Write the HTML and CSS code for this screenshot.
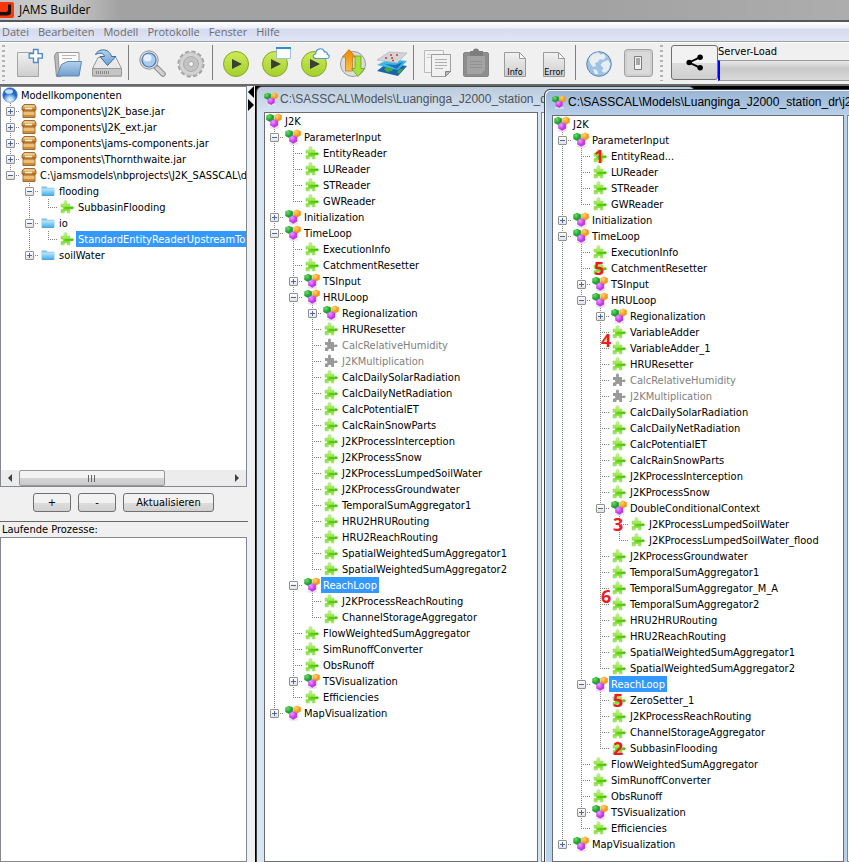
FILE: index.html
```
<!DOCTYPE html>
<html lang="de">
<head>
    <meta charset="UTF-8">
    <meta name="viewport" content="width=device-width, initial-scale=1.0">
    <title>JAMS Builder</title>
    <link rel="stylesheet" href="styles.css">
</head>
<body>

    <!-- Shared icons -->
    <svg class="defs" aria-hidden="true">
        <defs>
            <linearGradient id="gPuzzle" x1="0" y1="0" x2="0" y2="1">
                <stop offset="0" stop-color="#d3f5a6"/>
                <stop offset="0.45" stop-color="#9be84e"/>
                <stop offset="0.6" stop-color="#5fd417"/>
                <stop offset="1" stop-color="#b4f06c"/>
            </linearGradient>
            <radialGradient id="gGreen" cx="0.35" cy="0.3"><stop offset="0" stop-color="#6fdc60"/><stop offset="1" stop-color="#18a032"/></radialGradient>
            <radialGradient id="gOrange" cx="0.35" cy="0.3"><stop offset="0" stop-color="#ffd27a"/><stop offset="1" stop-color="#f09a1a"/></radialGradient>
            <radialGradient id="gPurple" cx="0.35" cy="0.3"><stop offset="0" stop-color="#ee9bff"/><stop offset="1" stop-color="#c436ea"/></radialGradient>
            <linearGradient id="gFolder" x1="0" y1="0" x2="0" y2="1"><stop offset="0" stop-color="#bfe9fb"/><stop offset="1" stop-color="#3fa6e6"/></linearGradient>
            <radialGradient id="gBall" cx="0.5" cy="0.85"><stop offset="0" stop-color="#ffffff"/><stop offset="0.45" stop-color="#a8d4f8"/><stop offset="1" stop-color="#1f66cc"/></radialGradient>
            <linearGradient id="gPaper" x1="0" y1="0" x2="0" y2="1"><stop offset="0" stop-color="#f2f2f2"/><stop offset="1" stop-color="#cdcdcd"/></linearGradient>
            <linearGradient id="gLime" x1="0" y1="0" x2="0" y2="1"><stop offset="0" stop-color="#cdea5a"/><stop offset="1" stop-color="#a3d02c"/></linearGradient>
            <linearGradient id="gBlue" x1="0" y1="0" x2="0" y2="1"><stop offset="0" stop-color="#b4d2ec"/><stop offset="1" stop-color="#6f9fce"/></linearGradient>
            <linearGradient id="gArrow" x1="0" y1="0" x2="0" y2="1"><stop offset="0" stop-color="#e88a00"/><stop offset="1" stop-color="#fbc04a"/></linearGradient>
        </defs>
        <symbol id="puzzle" viewBox="0 0 16 16">
            <path fill="url(#gPuzzle)" stroke="#8fd552" stroke-width=".5" d="M2 5h3.200C4.600 3 5.200 1.500 6.500 1.500S8.400 3 7.800 5H11v3c1.500-.9 3.600-.6 3.600.8S12.500 10.400 11 9.700V14H8.200c.5-1.600-.2-2.300-1.400-2.300S5 12.400 5.400 14H2v-3.600c1.600.5 2.300 0 2.300-1S3.500 7.800 2 8.300z"/>
            <path fill="#4cc40c" d="M6 8.200h5c1.500-.7 3.400-.5 3.400.6s-1.900 1.300-3.400.7H7z"/>
        </symbol>
        <symbol id="puzzle-off" viewBox="0 0 16 16">
            <path fill="#999" d="M2 5h3.200C4.600 3 5.200 1.500 6.500 1.500S8.400 3 7.800 5H11v3c1.500-.9 3.600-.6 3.600.8S12.500 10.400 11 9.700V14H8.200c.5-1.600-.2-2.300-1.400-2.300S5 12.400 5.400 14H2v-3.600c1.600.5 2.300 0 2.300-1S3.500 7.800 2 8.300z"/>
        </symbol>
        <symbol id="context" viewBox="0 0 16 16">
            <ellipse cx="8.500" cy="14.800" rx="5" ry="1" fill="#e4e4e4"/>
            <path fill="url(#gGreen)" d="M4 .8l3.900 1.600v4.400L4.200 8.900.3 6.900V2.500z"/>
            <path fill="url(#gOrange)" d="M11.900.6l3.900 1.600v4.200l-3.700 2.100-3.700-1.900V2.300z"/>
            <path fill="url(#gPurple)" d="M8.100 6.300l4.100 1.600v4.500l-3.900 2.400-4.100-2.200V8.200z"/>
        </symbol>
        <symbol id="jar" viewBox="0 0 16 16">
            <path fill="#d79a4a" stroke="#8a5418" stroke-width=".8" d="M3 1.500h10.500l1.500 2.500v3H1V4z"/>
            <path fill="#f4d7a4" d="M3.500 2.200h9.500l1 1.600H2.500z"/>
            <path fill="#d08c3c" stroke="#8a5418" stroke-width=".8" d="M2 7h12v7.500H2z"/>
            <path fill="#eabd78" d="M2.500 9h11v3h-11z"/>
            <path fill="#fff3da" d="M4 4.700h7v1.600H4z"/>
        </symbol>
        <symbol id="folder" viewBox="0 0 16 16">
            <path fill="#7cc3ea" d="M1.500 3.500h5l1 1.200H14v2H1.500z"/>
            <path fill="url(#gFolder)" d="M1.200 5.500h13.600L14.200 13H1.800z"/>
        </symbol>
        <symbol id="ball" viewBox="0 0 16 16">
            <circle cx="8" cy="8" r="7.300" fill="url(#gBall)" stroke="#4a86cf" stroke-width=".6"/>
            <ellipse cx="7" cy="4.500" rx="4" ry="2.300" fill="#fff" opacity=".75"/>
        </symbol>
        <symbol id="play" viewBox="0 0 32 32">
            <circle cx="16" cy="17" r="12.500" fill="url(#gLime)" stroke="#86a824"/>
            <path fill="#3c3f36" d="M12 12l10 5-10 5z"/>
        </symbol>
        <symbol id="paper" viewBox="0 0 32 32">
            <path fill="url(#gPaper)" stroke="#9a9a9a" d="M5.500 5.500h15l6 6v18h-21z"/>
            <path fill="#fafafa" stroke="#9a9a9a" d="M20.500 5.500v6h6z"/>
        </symbol>
    </svg>

    <header class="titlebar">
        <svg class="logo" viewBox="0 0 14 16" aria-hidden="true"><rect x="-3" width="17" height="16" rx="2" fill="#f8380a"/><path d="M8 2.500h3V10q0 3.500-4 3.500H0V10h6q2 0 2-2z" fill="#16100e"/></svg>
        <h1>JAMS Builder</h1>
    </header>

    <nav class="menubar">
        <button type="button">Datei</button>
        <button type="button">Bearbeiten</button>
        <button type="button">Modell</button>
        <button type="button">Protokolle</button>
        <button type="button">Fenster</button>
        <button type="button">Hilfe</button>
    </nav>

    <div class="toolbar">
        <span class="grip"></span>
        <button type="button" class="tool" aria-label="Neu">
            <svg viewBox="0 0 32 32"><path fill="url(#gPaper)" stroke="#a5a5a5" d="M4.500 5.500h21v24h-21z"/><path fill="#fff" stroke="#4a86c8" stroke-width="1.300" d="M20.500 2.500h4.500v4.200h4.300v4.500H25v4.300h-4.500v-4.300h-4.300V6.700h4.300z"/></svg>
        </button>
        <button type="button" class="tool" aria-label="Öffnen">
            <svg viewBox="0 0 32 32"><path fill="#bbb" stroke="#8c8c8c" d="M2.500 8.500l2-3h4v24h-4z"/><path fill="#fafafa" stroke="#999" d="M6 5.500h21v16H7z"/><path stroke="#b5b5b5" d="M10 8.500h14M10 11.500h10"/><path fill="url(#gBlue)" stroke="#5c88b4" d="M9.500 17.500l6-3h14l-2.500 14.500H5z"/></svg>
        </button>
        <button type="button" class="tool" aria-label="Speichern">
            <svg viewBox="0 0 32 32"><path fill="#e9e9e9" stroke="#999" d="M7 10.500h18l5.500 11v7.500h-29v-7.500z"/><path fill="#c4c4c4" stroke="#999" d="M1.500 21.500h29v7.500h-29z"/><path stroke="#8c8c8c" stroke-width="3" stroke-dasharray="1 1" d="M5 25.500h13"/><path fill="url(#gBlue)" stroke="#3b6ea8" d="M4.500 7.500C7 1.500 18 .5 20.500 9.500h4.300l-8.300 9-7.500-9h4.500c-1-4-5-4-9-2z"/></svg>
        </button>
        <span class="sep"></span>
        <button type="button" class="tool" aria-label="Suchen">
            <svg viewBox="0 0 32 32"><path stroke="#8c8c8c" stroke-width="5.500" stroke-linecap="round" d="M20 20l7 7"/><path stroke="#d0d0d0" stroke-width="3.500" stroke-linecap="round" d="M21 21l6 6"/><circle cx="13" cy="13" r="9.200" fill="#dcdcdc" stroke="#959595"/><circle cx="13" cy="13" r="7" fill="#a9cbee" stroke="#3f78bd" stroke-width="1.200"/><ellipse cx="11.500" cy="11" rx="4" ry="3.500" fill="#e6f1fb"/></svg>
        </button>
        <button type="button" class="tool" aria-label="Einstellungen">
            <svg viewBox="0 0 32 32"><circle cx="16" cy="17" r="11.500" fill="none" stroke="#a4a4a4" stroke-width="4" stroke-dasharray="4 2.020"/><circle cx="16" cy="17" r="11.500" fill="#d2d2d2" stroke="#bcbcbc"/><circle cx="16" cy="17" r="7.500" fill="#c2c2c2" stroke="#adadad"/><circle cx="16" cy="17" r="2.500" fill="#f4f4f4" stroke="#a8a8a8"/></svg>
        </button>
        <span class="sep"></span>
        <button type="button" class="tool" aria-label="Modell starten">
            <svg viewBox="0 0 32 32"><use href="#play"/></svg>
        </button>
        <button type="button" class="tool" aria-label="Im Launcher starten">
            <svg viewBox="0 0 32 32"><use href="#play"/><path fill="#fff" stroke="#9cc0da" d="M17.500 1.500h14v10h-14z"/><path fill="#2f8fc4" d="M17 0h15v2H17z"/></svg>
        </button>
        <button type="button" class="tool" aria-label="In der Cloud starten">
            <svg viewBox="0 0 32 32"><use href="#play"/><path fill="#fff" stroke="#4c9bce" stroke-width="1.200" d="M18 11.500c-3.500 0-3.500-4.500-.3-4.500 0-6 7.600-7 8.700-2 2.600-.6 3.200 1.300 2.800 2.300 3 .4 2.500 4.200-.2 4.200z"/></svg>
        </button>
        <button type="button" class="tool" aria-label="Daten übertragen">
            <svg viewBox="0 0 32 32"><circle cx="16" cy="17" r="12.500" fill="#ddd" stroke="#9a9a9a"/><path fill="url(#gArrow)" stroke="#c06c00" stroke-width=".7" d="M12 2.500l6.500 7.500h-3v14h-7V10h-3z"/><path fill="#a6e23a" stroke="#5d9a12" stroke-width=".7" d="M21 29.500l6.500-8h-3.500V9h-6v12.500h-3.500z"/></svg>
        </button>
        <button type="button" class="tool" aria-label="Karten">
            <svg viewBox="0 0 32 32"><path fill="#1766ad" d="M1 24l10-8 20 3-9 10z"/><path fill="#45a83c" d="M8 22l5-4 6 1-3 5-5 1zM21 25l3-3 3 0-4 5z"/><path fill="#3db7e6" d="M1 18l12-6 18 2-9 9z"/><path fill="#1a6fb8" d="M9 17l10 1 8-3-6 7z"/><path fill="#d2d5d8" stroke="#a9adb0" stroke-width=".6" d="M1 13l12-8 18 1-10 10z"/><path stroke="#e03030" stroke-width="1.500" stroke-dasharray="2 4" d="M9 11h11M14 8h11M16 13.500h6"/></svg>
        </button>
        <span class="sep"></span>
        <button type="button" class="tool" aria-label="Kopieren">
            <svg viewBox="0 0 32 32"><path fill="#f3f3f3" stroke="#bbb" d="M3.500 3.500h19v22h-19z"/><path stroke="#ccc" d="M6 7.500h14M6 10.500h14"/><path fill="#f1f1f1" stroke="#9f9f9f" d="M10.500 7.500h19v17l-5 5h-14z"/><path stroke="#b0b0b0" d="M14 12.500h12M14 15.500h12M14 18.500h12M14 21.500h8"/><path fill="#bbb" stroke="#888" d="M24.500 29.500v-5h5z"/></svg>
        </button>
        <button type="button" class="tool" aria-label="Einfügen">
            <svg viewBox="0 0 32 32"><rect x="3.500" y="5.500" width="25" height="24" rx="1.500" fill="#8e8e8e" stroke="#858585"/><path fill="#a3a3a3" d="M7 9h18v14l-4 4H7z"/><path fill="#7d7d7d" d="M10 4h3q0-2.500 3-2.500T19 4h4v5H10z"/><path stroke="#919191" d="M10 14.500h12M10 17.500h12M10 20.500h12"/></svg>
        </button>
        <button type="button" class="tool" aria-label="Info">
            <svg viewBox="0 0 32 32"><use href="#paper"/><text class="tool-text" x="16" y="28">Info</text></svg>
        </button>
        <button type="button" class="tool" aria-label="Error">
            <svg viewBox="0 0 32 32"><use href="#paper"/><text class="tool-text" x="16" y="28">Error</text></svg>
        </button>
        <span class="sep"></span>
        <button type="button" class="tool" aria-label="Online">
            <svg viewBox="0 0 32 32"><circle cx="16" cy="17" r="12.300" fill="#9cc3e6" stroke="#5a86b4"/><path fill="#e9edf0" d="M6 12c2-5 7-7 10-6.500l1 2 4-.5 2 3-3 3-3-1-2 3-3 1 1 3-3 1-3-4zM20 15l5-2 2.500 4-2 6-4 3-3-2 2-3-3-3zM10 22l4 1 1 4-3 0z"/></svg>
        </button>
        <button type="button" class="tool" aria-label="Schalter">
            <svg viewBox="0 0 32 32"><rect x="2.500" y="2.500" width="28" height="27" rx="3" fill="#cfcfcf" stroke="#a0a0a0"/><rect x="5" y="5" width="23" height="22" rx="2" fill="#dadada"/><path fill="#f2f2f2" stroke="#7c7c7c" d="M12.500 9.500h7v13h-7z"/><path fill="#a8a8a8" d="M14 11h4v7h-4z"/></svg>
        </button>
        <span class="grip"></span>
        <button type="button" class="share" aria-label="Teilen">
            <svg viewBox="0 0 16 16"><path stroke="#000" stroke-width="1.800" fill="none" d="M13.500 3L3 8l10.500 5"/><circle cx="3" cy="8" r="2.600"/><circle cx="13.300" cy="3" r="2.600"/><circle cx="13.300" cy="13" r="2.600"/></svg>
        </button>
        <div class="load">
            <span id="loadLabel">Server-Load</span>
            <div class="load-bar" role="meter" aria-labelledby="loadLabel" aria-valuenow="1" aria-valuemin="0" aria-valuemax="100"></div>
        </div>
    </div>

    <main class="workspace">
        <aside class="sidebar">
            <section class="components">
                <div class="pane component-pane">
                    <div class="tree-view">
                        <div class="row root"><svg><use href="#ball"/></svg><span>Modellkomponenten</span></div>
                        <ul class="tree">
                            <li><div class="row"><button type="button" class="knob plus" aria-label="Aufklappen"></button><svg><use href="#jar"/></svg><span>components\J2K_base.jar</span></div></li>
                            <li><div class="row"><button type="button" class="knob plus" aria-label="Aufklappen"></button><svg><use href="#jar"/></svg><span>components\J2K_ext.jar</span></div></li>
                            <li><div class="row"><button type="button" class="knob plus" aria-label="Aufklappen"></button><svg><use href="#jar"/></svg><span>components\jams-components.jar</span></div></li>
                            <li><div class="row"><button type="button" class="knob plus" aria-label="Aufklappen"></button><svg><use href="#jar"/></svg><span>components\Thornthwaite.jar</span></div></li>
                            <li><div class="row"><button type="button" class="knob" aria-label="Zuklappen"></button><svg><use href="#jar"/></svg><span>C:\jamsmodels\nbprojects\J2K_SASSCAL\d</span></div>
                                <ul class="tree">
                                    <li><div class="row"><button type="button" class="knob" aria-label="Zuklappen"></button><svg><use href="#folder"/></svg><span>flooding</span></div>
                                        <ul class="tree">
                                            <li><div class="row"><svg><use href="#puzzle"/></svg><span>SubbasinFlooding</span></div></li>
                                        </ul>
                                    </li>
                                    <li><div class="row"><button type="button" class="knob" aria-label="Zuklappen"></button><svg><use href="#folder"/></svg><span>io</span></div>
                                        <ul class="tree">
                                            <li><div class="row"><svg><use href="#puzzle"/></svg><span class="selected">StandardEntityReaderUpstreamTop</span></div></li>
                                        </ul>
                                    </li>
                                    <li><div class="row"><button type="button" class="knob plus" aria-label="Aufklappen"></button><svg><use href="#folder"/></svg><span>soilWater</span></div></li>
                                </ul>
                            </li>
                        </ul>
                    </div>
                    <div class="scrollbar">
                        <button type="button" class="arrow-left" aria-label="Nach links"></button>
                        <div class="track"><div class="thumb"></div></div>
                        <button type="button" class="arrow-right" aria-label="Nach rechts"></button>
                    </div>
                </div>
                <div class="actions">
                    <button type="button">+</button>
                    <button type="button">-</button>
                    <button type="button" class="wide">Aktualisieren</button>
                </div>
            </section>
            <section class="processes">
                <h2>Laufende Prozesse:</h2>
                <div class="pane process-pane"></div>
            </section>
        </aside>

        <div class="splitter">
            <button type="button" class="collapse-left" aria-label="Links einklappen"></button>
            <button type="button" class="collapse-right" aria-label="Rechts einklappen"></button>
        </div>

        <div class="desktop">

            <!-- Original model -->
            <section class="window back">
                <h2 class="window-title"><svg><use href="#context"/></svg><span>C:\SASSCAL\Models\Luanginga_J2000_station_dr\</span></h2>
                <div class="window-body">
                    <div class="pane model-pane">
                        <div class="row root"><svg><use href="#context"/></svg><span>J2K</span></div>
                        <ul class="tree">
                            <li><div class="row"><button type="button" class="knob" aria-label="Zuklappen"></button><svg><use href="#context"/></svg><span>ParameterInput</span></div>
                                <ul class="tree">
                                    <li><div class="row"><svg><use href="#puzzle"/></svg><span>EntityReader</span></div></li>
                                    <li><div class="row"><svg><use href="#puzzle"/></svg><span>LUReader</span></div></li>
                                    <li><div class="row"><svg><use href="#puzzle"/></svg><span>STReader</span></div></li>
                                    <li><div class="row"><svg><use href="#puzzle"/></svg><span>GWReader</span></div></li>
                                </ul>
                            </li>
                            <li><div class="row"><button type="button" class="knob plus" aria-label="Aufklappen"></button><svg><use href="#context"/></svg><span>Initialization</span></div></li>
                            <li><div class="row"><button type="button" class="knob" aria-label="Zuklappen"></button><svg><use href="#context"/></svg><span>TimeLoop</span></div>
                                <ul class="tree">
                                    <li><div class="row"><svg><use href="#puzzle"/></svg><span>ExecutionInfo</span></div></li>
                                    <li><div class="row"><svg><use href="#puzzle"/></svg><span>CatchmentResetter</span></div></li>
                                    <li><div class="row"><button type="button" class="knob plus" aria-label="Aufklappen"></button><svg><use href="#context"/></svg><span>TSInput</span></div></li>
                                    <li><div class="row"><button type="button" class="knob" aria-label="Zuklappen"></button><svg><use href="#context"/></svg><span>HRULoop</span></div>
                                        <ul class="tree">
                                            <li><div class="row"><button type="button" class="knob plus" aria-label="Aufklappen"></button><svg><use href="#context"/></svg><span>Regionalization</span></div></li>
                                            <li><div class="row"><svg><use href="#puzzle"/></svg><span>HRUResetter</span></div></li>
                                            <li><div class="row off"><svg><use href="#puzzle-off"/></svg><span>CalcRelativeHumidity</span></div></li>
                                            <li><div class="row off"><svg><use href="#puzzle-off"/></svg><span>J2KMultiplication</span></div></li>
                                            <li><div class="row"><svg><use href="#puzzle"/></svg><span>CalcDailySolarRadiation</span></div></li>
                                            <li><div class="row"><svg><use href="#puzzle"/></svg><span>CalcDailyNetRadiation</span></div></li>
                                            <li><div class="row"><svg><use href="#puzzle"/></svg><span>CalcPotentialET</span></div></li>
                                            <li><div class="row"><svg><use href="#puzzle"/></svg><span>CalcRainSnowParts</span></div></li>
                                            <li><div class="row"><svg><use href="#puzzle"/></svg><span>J2KProcessInterception</span></div></li>
                                            <li><div class="row"><svg><use href="#puzzle"/></svg><span>J2KProcessSnow</span></div></li>
                                            <li><div class="row"><svg><use href="#puzzle"/></svg><span>J2KProcessLumpedSoilWater</span></div></li>
                                            <li><div class="row"><svg><use href="#puzzle"/></svg><span>J2KProcessGroundwater</span></div></li>
                                            <li><div class="row"><svg><use href="#puzzle"/></svg><span>TemporalSumAggregator1</span></div></li>
                                            <li><div class="row"><svg><use href="#puzzle"/></svg><span>HRU2HRURouting</span></div></li>
                                            <li><div class="row"><svg><use href="#puzzle"/></svg><span>HRU2ReachRouting</span></div></li>
                                            <li><div class="row"><svg><use href="#puzzle"/></svg><span>SpatialWeightedSumAggregator1</span></div></li>
                                            <li><div class="row"><svg><use href="#puzzle"/></svg><span>SpatialWeightedSumAggregator2</span></div></li>
                                        </ul>
                                    </li>
                                    <li><div class="row"><button type="button" class="knob" aria-label="Zuklappen"></button><svg><use href="#context"/></svg><span class="selected">ReachLoop</span></div>
                                        <ul class="tree">
                                            <li><div class="row"><svg><use href="#puzzle"/></svg><span>J2KProcessReachRouting</span></div></li>
                                            <li><div class="row"><svg><use href="#puzzle"/></svg><span>ChannelStorageAggregator</span></div></li>
                                        </ul>
                                    </li>
                                    <li><div class="row"><svg><use href="#puzzle"/></svg><span>FlowWeightedSumAggregator</span></div></li>
                                    <li><div class="row"><svg><use href="#puzzle"/></svg><span>SimRunoffConverter</span></div></li>
                                    <li><div class="row"><svg><use href="#puzzle"/></svg><span>ObsRunoff</span></div></li>
                                    <li><div class="row"><button type="button" class="knob plus" aria-label="Aufklappen"></button><svg><use href="#context"/></svg><span>TSVisualization</span></div></li>
                                    <li><div class="row"><svg><use href="#puzzle"/></svg><span>Efficiencies</span></div></li>
                                </ul>
                            </li>
                            <li><div class="row"><button type="button" class="knob plus" aria-label="Aufklappen"></button><svg><use href="#context"/></svg><span>MapVisualization</span></div></li>
                        </ul>
                    </div>
                    <div class="pane detail-pane"></div>
                </div>
            </section>

            <!-- Modified model, changes numbered -->
            <section class="window front">
                <h2 class="window-title"><svg><use href="#context"/></svg><span>C:\SASSCAL\Models\Luanginga_J2000_station_dr\j2k_</span></h2>
                <div class="window-body">
                    <div class="pane model-pane">
                        <div class="row root"><svg><use href="#context"/></svg><span>J2K</span></div>
                        <ul class="tree">
                            <li><div class="row"><button type="button" class="knob" aria-label="Zuklappen"></button><svg><use href="#context"/></svg><span>ParameterInput</span></div>
                                <ul class="tree">
                                    <li><div class="row"><svg><use href="#puzzle"/></svg><span>EntityRead...</span><b class="mark">1</b></div></li>
                                    <li><div class="row"><svg><use href="#puzzle"/></svg><span>LUReader</span></div></li>
                                    <li><div class="row"><svg><use href="#puzzle"/></svg><span>STReader</span></div></li>
                                    <li><div class="row"><svg><use href="#puzzle"/></svg><span>GWReader</span></div></li>
                                </ul>
                            </li>
                            <li><div class="row"><button type="button" class="knob plus" aria-label="Aufklappen"></button><svg><use href="#context"/></svg><span>Initialization</span></div></li>
                            <li><div class="row"><button type="button" class="knob" aria-label="Zuklappen"></button><svg><use href="#context"/></svg><span>TimeLoop</span></div>
                                <ul class="tree">
                                    <li><div class="row"><svg><use href="#puzzle"/></svg><span>ExecutionInfo</span></div></li>
                                    <li><div class="row"><svg><use href="#puzzle"/></svg><span>CatchmentResetter</span><b class="mark">5</b></div></li>
                                    <li><div class="row"><button type="button" class="knob plus" aria-label="Aufklappen"></button><svg><use href="#context"/></svg><span>TSInput</span></div></li>
                                    <li><div class="row"><button type="button" class="knob" aria-label="Zuklappen"></button><svg><use href="#context"/></svg><span>HRULoop</span></div>
                                        <ul class="tree">
                                            <li><div class="row"><button type="button" class="knob plus" aria-label="Aufklappen"></button><svg><use href="#context"/></svg><span>Regionalization</span></div></li>
                                            <li><div class="row"><svg><use href="#puzzle"/></svg><span>VariableAdder</span><b class="mark between">4</b></div></li>
                                            <li><div class="row"><svg><use href="#puzzle"/></svg><span>VariableAdder_1</span></div></li>
                                            <li><div class="row"><svg><use href="#puzzle"/></svg><span>HRUResetter</span></div></li>
                                            <li><div class="row off"><svg><use href="#puzzle-off"/></svg><span>CalcRelativeHumidity</span></div></li>
                                            <li><div class="row off"><svg><use href="#puzzle-off"/></svg><span>J2KMultiplication</span></div></li>
                                            <li><div class="row"><svg><use href="#puzzle"/></svg><span>CalcDailySolarRadiation</span></div></li>
                                            <li><div class="row"><svg><use href="#puzzle"/></svg><span>CalcDailyNetRadiation</span></div></li>
                                            <li><div class="row"><svg><use href="#puzzle"/></svg><span>CalcPotentialET</span></div></li>
                                            <li><div class="row"><svg><use href="#puzzle"/></svg><span>CalcRainSnowParts</span></div></li>
                                            <li><div class="row"><svg><use href="#puzzle"/></svg><span>J2KProcessInterception</span></div></li>
                                            <li><div class="row"><svg><use href="#puzzle"/></svg><span>J2KProcessSnow</span></div></li>
                                            <li><div class="row"><button type="button" class="knob" aria-label="Zuklappen"></button><svg><use href="#context"/></svg><span>DoubleConditionalContext</span></div>
                                                <ul class="tree">
                                                    <li><div class="row"><svg><use href="#puzzle"/></svg><span>J2KProcessLumpedSoilWater</span><b class="mark left">3</b></div></li>
                                                    <li><div class="row"><svg><use href="#puzzle"/></svg><span>J2KProcessLumpedSoilWater_flood</span></div></li>
                                                </ul>
                                            </li>
                                            <li><div class="row"><svg><use href="#puzzle"/></svg><span>J2KProcessGroundwater</span></div></li>
                                            <li><div class="row"><svg><use href="#puzzle"/></svg><span>TemporalSumAggregator1</span></div></li>
                                            <li><div class="row"><svg><use href="#puzzle"/></svg><span>TemporalSumAggregator_M_A</span><b class="mark between">6</b></div></li>
                                            <li><div class="row"><svg><use href="#puzzle"/></svg><span>TemporalSumAggregator2</span></div></li>
                                            <li><div class="row"><svg><use href="#puzzle"/></svg><span>HRU2HRURouting</span></div></li>
                                            <li><div class="row"><svg><use href="#puzzle"/></svg><span>HRU2ReachRouting</span></div></li>
                                            <li><div class="row"><svg><use href="#puzzle"/></svg><span>SpatialWeightedSumAggregator1</span></div></li>
                                            <li><div class="row"><svg><use href="#puzzle"/></svg><span>SpatialWeightedSumAggregator2</span></div></li>
                                        </ul>
                                    </li>
                                    <li><div class="row"><button type="button" class="knob" aria-label="Zuklappen"></button><svg><use href="#context"/></svg><span class="selected">ReachLoop</span></div>
                                        <ul class="tree">
                                            <li><div class="row"><svg><use href="#puzzle"/></svg><span>ZeroSetter_1</span><b class="mark">5</b></div></li>
                                            <li><div class="row"><svg><use href="#puzzle"/></svg><span>J2KProcessReachRouting</span></div></li>
                                            <li><div class="row"><svg><use href="#puzzle"/></svg><span>ChannelStorageAggregator</span></div></li>
                                            <li><div class="row"><svg><use href="#puzzle"/></svg><span>SubbasinFlooding</span><b class="mark">2</b></div></li>
                                        </ul>
                                    </li>
                                    <li><div class="row"><svg><use href="#puzzle"/></svg><span>FlowWeightedSumAggregator</span></div></li>
                                    <li><div class="row"><svg><use href="#puzzle"/></svg><span>SimRunoffConverter</span></div></li>
                                    <li><div class="row"><svg><use href="#puzzle"/></svg><span>ObsRunoff</span></div></li>
                                    <li><div class="row"><button type="button" class="knob plus" aria-label="Aufklappen"></button><svg><use href="#context"/></svg><span>TSVisualization</span></div></li>
                                    <li><div class="row"><svg><use href="#puzzle"/></svg><span>Efficiencies</span></div></li>
                                </ul>
                            </li>
                            <li><div class="row"><button type="button" class="knob plus" aria-label="Aufklappen"></button><svg><use href="#context"/></svg><span>MapVisualization</span></div></li>
                        </ul>
                    </div>
                    <div class="pane detail-pane"></div>
                </div>
            </section>
        </div>
    </main>

</body>
</html>
```
FILE: styles.css
```
* {
    box-sizing: border-box;
}
body {
    margin: 0;
    height: 100vh;
    display: flex;
    flex-direction: column;
    overflow: hidden;
    background: #f0f0f0;
    color: #000;
    font-family: "DejaVu Sans Condensed", Tahoma, sans-serif;
    font-size: 11px;
    line-height: 16px;
}
h1, h2, ul {
    margin: 0;
    padding: 0;
    font-size: inherit;
    font-weight: normal;
}
button {
    padding: 0;
    border: none;
    background: none;
    color: inherit;
    font: inherit;
}
.defs {
    position: absolute;
    width: 0;
    height: 0;
}

/* Title and menu */
.titlebar {
    display: flex;
    flex: none;
    align-items: center;
    gap: 5px;
    height: 22px;
    border-bottom: 2px solid #55585a;
    background: linear-gradient(to right, #c4c4c4 0, #cdcdcd 60px, #a2a2a2 120px, #a2a2a2 70%, #adadad);
}
.logo {
    width: 14px;
    height: 16px;
}
.titlebar h1 {
    font-family: "Open Sans", sans-serif;
    font-size: 12px;
}
.menubar {
    display: flex;
    flex: none;
    gap: 9px;
    height: 20px;
    padding-left: 2px;
    border-bottom: 1px solid #a0a0a0;
    background: linear-gradient(#fff 0, #eef0f8 6px, #d5dbee 7px, #e0e6f7 100%);
}
.menubar button {
    color: #6d6d6d;
    font-family: "Open Sans", sans-serif;
}

/* Toolbar */
.toolbar {
    display: flex;
    flex: none;
    align-items: center;
    height: 44px;
    padding-bottom: 2px;
    border-top: 1px solid #fff;
    border-bottom: 2px solid #696969;
    background: #f0f0f0;
}
.grip {
    flex: none;
    width: 3px;
    height: 36px;
    margin: 0 4px 0 2px;
    background: repeating-linear-gradient(#b4b4b4 0 2px, #f0f0f0 2px 5px);
}
.tool + .grip {
    margin: 0 8px 0 3px;
}
.tool {
    flex: none;
    width: 39px;
    height: 36px;
}
.tool svg {
    display: block;
    width: 32px;
    height: 32px;
    margin: 0 auto;
    fill: none;
}
.tool-text {
    fill: #000;
    font-size: 9px;
    text-anchor: middle;
}
.sep {
    flex: none;
    width: 1px;
    height: 35px;
    margin: 0 3px 0 2px;
    background: #808080;
}
.share {
    flex: none;
    width: 47px;
    height: 35px;
    border: 1px solid #707070;
    border-radius: 3px;
    background: linear-gradient(#f2f2f2 50%, #dddddd 50%, #cfcfcf);
}
.share svg {
    display: block;
    width: 17px;
    height: 17px;
    margin: 0 auto;
}
.load {
    flex: 1;
    min-width: 0;
}
.load-bar {
    height: 21px;
    border: 1px solid #9a9a9a;
    border-left: 2px solid #0000ff;
    border-right: none;
    background: linear-gradient(#e8e8e8, #c8c8c8 40%, #dadada);
}

/* Sidebar */
.workspace {
    display: flex;
    flex: 1;
    min-height: 0;
}
.sidebar {
    display: flex;
    flex: none;
    flex-direction: column;
    width: 248px;
}
.components {
    display: flex;
    flex: none;
    flex-direction: column;
    height: 436px;
    padding-right: 1px;
    border-bottom: 1px solid #696969;
}
.pane {
    border: 1px solid #828790;
    background: #fff;
    overflow: hidden;
}
.component-pane {
    display: flex;
    flex: 1;
    flex-direction: column;
}
.tree-view {
    flex: 1;
    overflow: hidden;
}
.tree-view .root {
    padding-left: 0;
}
.scrollbar {
    display: flex;
    height: 16px;
    background: #ececec;
}
.scrollbar button {
    width: 18px;
    height: 16px;
}
.arrow-left::before, .arrow-right::before {
    content: "";
    display: block;
    width: 0;
    margin: 0 auto;
    border: 4px solid transparent;
}
.arrow-left::before {
    border-right-color: #404040;
    border-left-width: 0;
}
.arrow-right::before {
    border-left-color: #404040;
    border-right-width: 0;
}
.track {
    flex: 1;
}
.thumb {
    width: 70%;
    height: 16px;
    border: 1px solid #979797;
    border-radius: 2px;
    background:
        repeating-linear-gradient(to right, #666 0 1px, transparent 1px 3px) center / 8px 7px no-repeat,
        linear-gradient(#f3f3f3 50%, #d6d6d6 50%, #c9c9c9);
}
.actions {
    display: flex;
    justify-content: center;
    gap: 7px;
    padding: 6px 0 9px;
}
.actions button {
    width: 38px;
    height: 19px;
    border: 1px solid #707070;
    border-radius: 3px;
    background: linear-gradient(#f2f2f2 50%, #dddddd 50%, #d2d2d2);
}
.actions .wide {
    width: 91px;
}
.processes {
    display: flex;
    flex: 1;
    flex-direction: column;
    padding-right: 1px;
}
.processes h2 {
    height: 15px;
    padding-left: 2px;
}
.process-pane {
    flex: 1;
}

/* Splitter */
.splitter {
    flex: none;
    width: 7px;
}
.collapse-left, .collapse-right {
    display: block;
    width: 0;
    height: 0;
    margin-bottom: 1px;
    border: 6px solid transparent;
}
.collapse-left {
    border-right-color: #000;
    border-left-width: 0;
}
.collapse-right {
    border-left-color: #000;
    border-right-width: 0;
}

/* Trees */
.tree {
    list-style: none;
}
.tree .tree {
    margin-left: 19px;
}
.tree > li {
    background: repeating-linear-gradient(#808080 0 1px, transparent 1px 2px) 9px 0 / 1px 100% no-repeat;
}
.tree > li:last-child {
    background-size: 1px 9px;
}
.row {
    position: relative;
    display: flex;
    align-items: center;
    height: 16px;
    padding-left: 20px;
    white-space: nowrap;
    background: repeating-linear-gradient(to right, #808080 0 1px, transparent 1px 2px) 9px 8px / 10px 1px no-repeat;
}
.row.root {
    padding-left: 1px;
    background: none;
}
.row svg {
    flex: none;
    width: 16px;
    height: 16px;
}
.row span {
    margin-left: 1px;
    padding: 2px 2px 0;
    line-height: 14px;
}
.row .selected {
    background: #3399ff;
    color: #fff;
}
.off {
    color: #808080;
}
.knob {
    flex: none;
    width: 9px;
    height: 9px;
    margin: 1px 6px 0 -15px;
    border: 1px solid #919191;
    border-radius: 1px;
    background: linear-gradient(#4b63a7, #4b63a7) center / 5px 1px no-repeat, linear-gradient(#fff, #e2e2e2);
}
.knob.plus {
    background:
        linear-gradient(#4b63a7, #4b63a7) center / 5px 1px no-repeat,
        linear-gradient(#4b63a7, #4b63a7) center / 1px 5px no-repeat,
        linear-gradient(#fff, #e2e2e2);
}
.mark {
    position: absolute;
    top: 0;
    left: 22px;
    color: #ed1c24;
    font-family: "Open Sans", sans-serif;
    font-size: 18px;
    line-height: 16px;
}
.mark.between {
    top: 8px;
    left: 10px;
}
.mark.left {
    left: 3px;
}

/* Model windows */
.desktop {
    position: relative;
    flex: 1;
    overflow: hidden;
    background: #000;
}
.window {
    position: absolute;
    bottom: -8px;
    display: flex;
    flex-direction: column;
    width: 439px;
    padding: 0 7px 7px;
    border: 1px solid #3c3f42;
    border-radius: 6px 6px 0 0;
}
.back {
    top: 0;
    left: 1px;
    background: linear-gradient(#bccbdb, #d7e4f2 26px);
}
.front {
    top: 3px;
    left: 289px;
    background: linear-gradient(#98b4d2, #b9d1ea 26px);
    box-shadow: inset 1px 1px 0 #eef5fc;
}
.window-title {
    display: flex;
    flex: none;
    align-items: center;
    gap: 2px;
    height: 25px;
    padding-bottom: 2px;
    overflow: hidden;
    font-family: "Liberation Sans", sans-serif;
    font-size: 12px;
    white-space: nowrap;
}
.window-title svg {
    flex: none;
    width: 14px;
    height: 14px;
}
.back .window-title {
    color: #4c535c;
}
.window-body {
    display: flex;
    flex: 1;
    gap: 3px;
    min-height: 0;
}
.model-pane {
    flex: none;
    width: 274px;
    border-color: #696d73;
}
.front .model-pane {
    width: 292px;
}
.detail-pane {
    flex: 1;
}
```
